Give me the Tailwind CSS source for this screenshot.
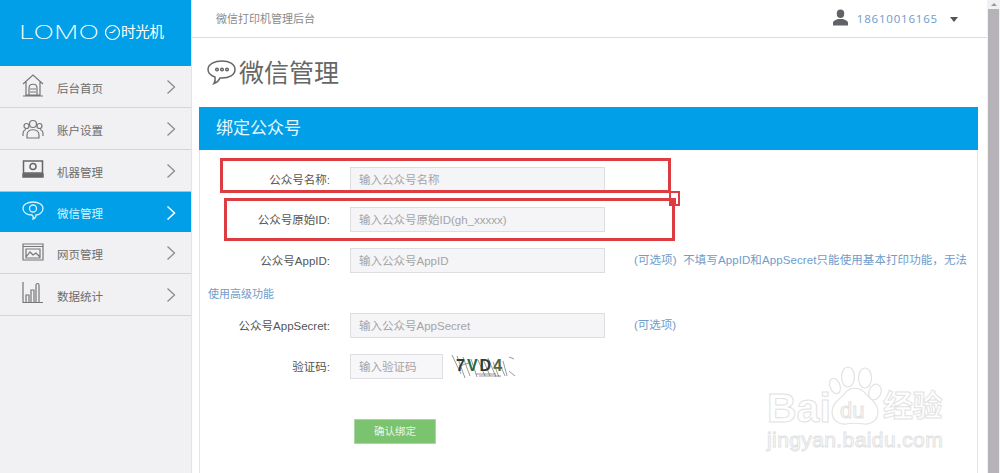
<!DOCTYPE html>
<html lang="zh">
<head>
    <meta charset="UTF-8">
    <title>微信管理</title>
    <script src="https://cdn.jsdelivr.net/npm/@tailwindcss/browser@4"></script>
</head>
<body class="h-[473px] w-[1000px] overflow-hidden bg-white font-['Liberation_Sans','Noto_Sans_CJK_SC',sans-serif] text-[#555]">
    <div class="relative flex h-[473px] w-[1000px] overflow-hidden">
        <!-- Sidebar -->
        <aside class="h-full w-[192px] shrink-0 border-r border-[#e4e4e8] bg-[#f1f0f3]">
            <div class="flex h-[66px] items-center bg-[#019fe8] pb-[2px] pl-[19px] text-white">
                <span class="w-[85px] origin-left scale-x-[1.43] font-['Inter',sans-serif] text-[19px] leading-none font-extralight whitespace-nowrap">LOMO</span>
                <svg class="h-[17px] w-[17px] shrink-0" viewBox="0 0 17 17" fill="none" stroke="currentColor" stroke-width="1.2"><circle cx="8.500" cy="8.500" r="7"/><path d="M8.500 8.500 11.500 5.500M8.500 8.500H5.500"/></svg>
                <span class="text-[14.500px] leading-none font-normal tracking-[-0.3px] whitespace-nowrap">时光机</span>
            </div>
            <nav class="text-[11.500px]">
                <a class="flex h-[42px] items-center border-b border-[#d5d5d8] pr-[15px] pl-[22px] text-[#6d6d6d]">
                    <svg class="h-[24px] w-[22px] shrink-0 -translate-y-[2px]" viewBox="0 0 22 24" fill="none" stroke="#777" stroke-width="1.2"><path d="M1 11 11 2l10 9M4 9v13h14V9M1 23h20M7 22v-7c0-5 8-5 8 0v7M8 16h6M8 19h6"/></svg>
                    <span class="ml-[13px] flex-1 pt-[6px]">后台首页</span>
                    <svg class="mt-[1px] h-[16px] w-[10px]" viewBox="0 0 10 16" fill="none" stroke="#8b8b8b" stroke-width="1.3"><path d="m1.500 1.500 7 6.500-7 6.500"/></svg>
                </a>
                <a class="flex h-[42px] items-center border-b border-[#d5d5d8] pr-[15px] pl-[22px] text-[#6d6d6d]">
                    <svg class="h-[22px] w-[22px] shrink-0" viewBox="0 0 22 22" fill="none" stroke="#777" stroke-width="1.2"><circle cx="11" cy="6" r="3.500"/><circle cx="4.500" cy="8" r="2.500"/><circle cx="17.500" cy="8" r="2.500"/><path d="M5 20v-3c0-7 12-7 12 0v3zM1 18v-2c0-3 1-4 3-4.500M21 18v-2c0-3-1-4-3-4.500"/></svg>
                    <span class="ml-[13px] flex-1 pt-[6px]">账户设置</span>
                    <svg class="mt-[1px] h-[16px] w-[10px]" viewBox="0 0 10 16" fill="none" stroke="#8b8b8b" stroke-width="1.3"><path d="m1.500 1.500 7 6.500-7 6.500"/></svg>
                </a>
                <a class="flex h-[41px] items-center pr-[15px] pl-[22px] text-[#6d6d6d]">
                    <svg class="h-[18px] w-[22px] shrink-0 -translate-y-[2px]" viewBox="0 0 22 18" fill="none" stroke="#666" stroke-width="1.500"><path d="M1.500 1h19v12h-19z"/><circle cx="11" cy="6.500" r="3"/><path fill="#666" d="M1 14h20v3H1z"/></svg>
                    <span class="ml-[13px] flex-1 pt-[6px]">机器管理</span>
                    <svg class="mt-[1px] h-[16px] w-[10px]" viewBox="0 0 10 16" fill="none" stroke="#8b8b8b" stroke-width="1.3"><path d="m1.500 1.500 7 6.500-7 6.500"/></svg>
                </a>
                <a class="flex h-[41px] items-center border-t border-[#7fd0f5] bg-[#019fe8] pr-[15px] pl-[22px] text-[#d8f3ff]">
                    <svg class="h-[19px] w-[22px] shrink-0 -translate-y-[2px]" viewBox="0 0 22 19" fill="none" stroke="#d8f3ff" stroke-width="1.300"><path d="M11 1c5.500 0 10 2.500 10 6.500S17 14 14 14c0 2-1 3.500-3 4 .5-1.500.3-3-1-4-5 0-9-2.500-9-6.500S5.500 1 11 1z"/><circle cx="11" cy="7.500" r="3.500"/></svg>
                    <span class="ml-[13px] flex-1 pt-[6px]">微信管理</span>
                    <svg class="mt-[1px] h-[16px] w-[10px]" viewBox="0 0 10 16" fill="none" stroke="#fff" stroke-width="1.500"><path d="m1.500 1.500 7 6.500-7 6.500"/></svg>
                </a>
                <a class="flex h-[42px] items-center border-b border-[#d5d5d8] pr-[15px] pl-[22px] text-[#6d6d6d]">
                    <svg class="h-[18px] w-[22px] shrink-0 -translate-y-[1px]" viewBox="0 0 22 18" fill="none" stroke="#777" stroke-width="1.200"><path d="M1 1h20v16H1zM1 3.500h20"/><path d="M4 6h14v9H4zM4 14l4-5 3 3 3-2 4 4"/></svg>
                    <span class="ml-[13px] flex-1 pt-[6px]">网页管理</span>
                    <svg class="mt-[1px] h-[16px] w-[10px]" viewBox="0 0 10 16" fill="none" stroke="#8b8b8b" stroke-width="1.3"><path d="m1.500 1.500 7 6.500-7 6.500"/></svg>
                </a>
                <a class="flex h-[42px] items-center border-b border-[#d5d5d8] pr-[15px] pl-[22px] text-[#6d6d6d]">
                    <svg class="h-[21px] w-[21px] shrink-0 -translate-y-[2px]" viewBox="0 0 21 21" fill="none" stroke="#777" stroke-width="1.200"><path d="M1 0v20.500h20M4 20v-7h3v7M9 20V8h3v12M14 20V3c0-2 3-2 3 0v17"/></svg>
                    <span class="ml-[14px] flex-1 pt-[6px]">数据统计</span>
                    <svg class="mt-[1px] h-[16px] w-[10px]" viewBox="0 0 10 16" fill="none" stroke="#8b8b8b" stroke-width="1.3"><path d="m1.500 1.500 7 6.500-7 6.500"/></svg>
                </a>
            </nav>
        </aside>

        <!-- Main -->
        <main class="flex h-full w-[795px] shrink-0 flex-col">
            <header class="flex h-[38px] shrink-0 items-center border-b border-[#dcdcdc] pr-[29px] pl-[24px] text-[11px] text-[#8a8a8a]">
                <span class="flex-1 pt-[2px]">微信打印机管理后台</span>
                <svg class="mr-[9px] mb-[3px] h-[17px] w-[15px]" viewBox="0 0 16 17" fill="#5f6368"><ellipse cx="8" cy="4.500" rx="4" ry="4.500"/><path d="M0 17v-3c0-2 3-3 5.500-4h5c2.500 1 5.500 2 5.500 4v3z"/></svg>
                <span class="font-['Open_Sans',sans-serif] text-[11.500px] tracking-[0.8px] text-[#6f9cc9]">18610016165</span>
                <span class="mt-[1px] ml-[12px] h-0 w-0 border-x-[4.500px] border-t-[5px] border-x-transparent border-t-[#555]"></span>
            </header>
            <h1 class="flex h-[69px] shrink-0 items-center pt-[2px] pl-[15px] text-[25px] leading-none font-normal text-[#666]">
                <svg class="mr-[3px] h-[25px] w-[29px] -translate-y-px" viewBox="0 0 29 25" fill="none" stroke="#666" stroke-width="1.500"><path d="M15 1c7 0 13 3 13 8.500S22 18 15 18h-2c-1 2.500-3 4.500-6 5.500 1-1.500 1.500-3.500 1-6.500C3.500 15.500 1 13 1 9.500 1 4 8 1 15 1z"/><circle cx="10" cy="9.500" r="1.300"/><circle cx="15" cy="9.500" r="1.300"/><circle cx="20" cy="9.500" r="1.300"/></svg>
                微信管理
            </h1>
            <section class="ml-[7px] w-[779px] flex-1 rounded-t-[2px] border-x border-[#e3e3e8]">
                <h2 class="-mx-px flex h-[43px] items-center bg-[#019fe8] pt-[1px] pl-[17px] text-[17px] font-normal text-[#e8f8ff]">绑定公众号</h2>
                <form class="pt-[17px] text-[11.500px] text-[#555]">
                    <div class="flex h-[25px] items-center">
                        <label class="w-[130px] pt-[3px] text-right">公众号名称:</label>
                        <div class="ml-[20px] flex h-[25px] w-[255px] items-center border border-[#dedde1] bg-[#f5f4f7] pt-[2px] pl-[8px] text-[#a5a5a5]">输入公众号名称</div>
                    </div>
                    <div class="mt-[15px] flex h-[25px] items-center">
                        <label class="w-[130px] pt-[3px] text-right">公众号原始ID:</label>
                        <div class="ml-[20px] flex h-[25px] w-[255px] items-center border border-[#dedde1] bg-[#f5f4f7] pt-[2px] pl-[8px] text-[#a5a5a5]">输入公众号原始ID(gh_xxxxx)</div>
                    </div>
                    <div class="mt-[16px] flex h-[25px] items-center">
                        <label class="w-[130px] pt-[3px] text-right">公众号AppID:</label>
                        <div class="ml-[20px] flex h-[25px] w-[255px] items-center border border-[#dedde1] bg-[#f5f4f7] pt-[2px] pl-[8px] text-[#a5a5a5]">输入公众号AppID</div>
                        <span class="ml-[29px] tracking-[0.09px] whitespace-nowrap text-[#6f9cc9]">(可选项)&nbsp;&nbsp;不填写AppID和AppSecret只能使用基本打印功能，无法</span>
                    </div>
                    <p class="mt-[13px] pl-[8px] text-[11px] leading-[16px] text-[#6f9cc9]">使用高级功能</p>
                    <div class="mt-[11px] flex h-[25px] items-center">
                        <label class="w-[130px] pt-[3px] text-right">公众号AppSecret:</label>
                        <div class="ml-[20px] flex h-[25px] w-[255px] items-center border border-[#dedde1] bg-[#f5f4f7] pt-[2px] pl-[8px] text-[#a5a5a5]">输入公众号AppSecret</div>
                        <span class="ml-[29px] text-[#6f9cc9]">(可选项)</span>
                    </div>
                    <div class="mt-[16px] flex h-[25px] items-center">
                        <label class="w-[130px] pt-[3px] text-right">验证码:</label>
                        <div class="ml-[20px] flex h-[25px] w-[93px] items-center border border-[#dedde1] bg-[#f7f6f9] pt-[2px] pl-[8px] text-[#a5a5a5]">输入验证码</div>
                        <div class="relative ml-[6px] h-[26px] w-[66px]">
                            <svg class="absolute inset-0 h-full w-full" viewBox="0 0 66 26" fill="none" stroke="#6f6f6f" stroke-width="0.7"><path d="M3 1l9 19M8 2l8 22M14 3l7 19M22 5l6 18M29 6l7 16M34 5l7 17M39 4l8 19M44 8l6 15M49 6l7 16M54 7l4 15M60 3l5 2M60 17l6 5M10 12l10-3M27 20l20 0M30 22l22 0"/></svg>
                            <span class="absolute top-[1px] left-[7px] font-['Liberation_Sans',sans-serif] text-[16px] leading-[22px] font-bold tracking-[2px] text-[#2f3e38]">7<span class="text-[#1f6a4a]">V</span>D<span class="text-[#50683a]">4</span></span>
                        </div>
                    </div>
                    <button type="button" class="mt-[40px] ml-[154px] flex h-[25px] w-[82px] items-center justify-center border border-[#a8d8a0] bg-[#7cc36f] text-[10.500px] text-[#e9f7e4]">确认绑定</button>
                </form>
            </section>
        </main>

        <!-- Scrollbar -->
        <div class="flex h-full w-[13px] shrink-0 flex-col items-center bg-[#f1f0f3]">
            <span class="mt-[3px] h-0 w-0 border-x-[3px] border-b-[3px] border-x-transparent border-b-[#9a9a9a]"></span>
            <div class="mt-[3px] h-full w-[11px] bg-[#b5b3b7]"></div>
        </div>

        <!-- Red annotation boxes -->
        <div class="absolute top-[158px] left-[220px] h-[35px] w-[451px] border-[3px] border-[#dd3c40]"></div>
        <div class="absolute top-[198px] left-[224px] h-[43px] w-[451px] border-[3px] border-[#dd3c40]"></div>
        <div class="absolute top-[191px] left-[669px] h-[15px] w-[11px] border-[2px] border-[#dd3c40]"></div>
        <div class="absolute top-[198px] left-[669px] h-[8px] w-[7px] bg-[#dd3c40]"></div>

        <!-- Baidu watermark -->
        <div class="absolute top-[366px] left-[767px] h-[100px] w-[210px] text-transparent [-webkit-text-stroke:1px_#e2e2e2]">
            <span class="absolute top-[22px] left-0 font-['Liberation_Sans',sans-serif] text-[41px] leading-none font-bold">Bai</span>
            <svg class="absolute top-0 left-[59px] h-[62px] w-[56px]" viewBox="0 0 56 62" fill="none" stroke="#e2e2e2" stroke-width="1.200"><ellipse cx="9" cy="20" rx="5" ry="8" transform="rotate(-20 9 20)"/><ellipse cx="22" cy="11" rx="6.500" ry="10"/><ellipse cx="39" cy="12" rx="6.500" ry="10"/><ellipse cx="49" cy="26" rx="6" ry="8" transform="rotate(20 49 26)"/><path d="M6 46c0-10 10-14 14-20 4-5 14-5 18 0 4 6 14 10 14 20 0 8-7 13-14 12-6-1-12-1-18 0-7 1-14-4-14-12z"/></svg>
            <span class="absolute top-[34px] left-[73px] font-['Liberation_Sans',sans-serif] text-[22px] leading-none">du</span>
            <span class="absolute top-[25px] left-[116px] text-[30px] leading-none font-bold tracking-[-0.5px] whitespace-nowrap">经验</span>
            <span class="absolute top-[63px] left-0 font-['Liberation_Sans',sans-serif] text-[21px] leading-none tracking-[0.4px] whitespace-nowrap">jingyan.baidu.com</span>
        </div>
    </div>
</body>
</html>
